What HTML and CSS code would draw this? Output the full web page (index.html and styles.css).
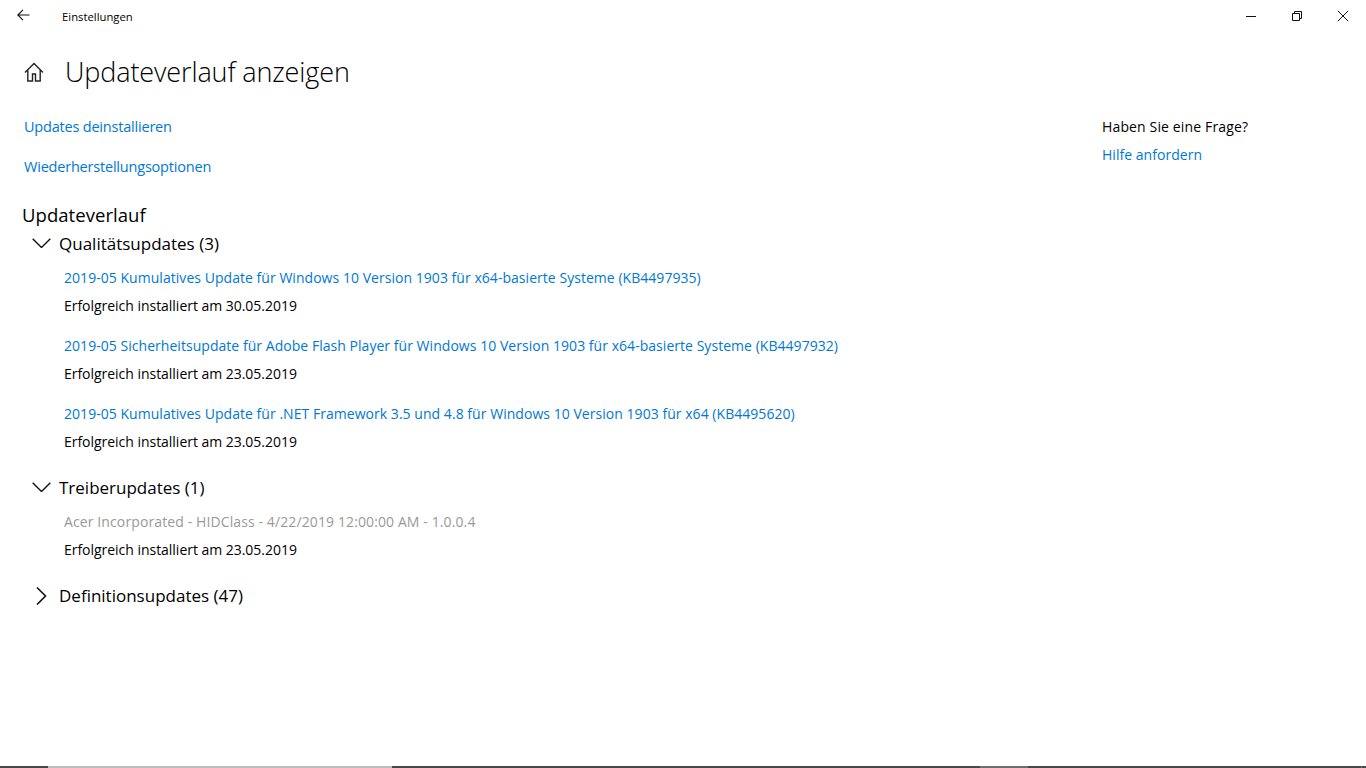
FILE: index.html
```html
<!DOCTYPE html>
<html lang="de">
<head>
<meta charset="utf-8">
<title>Einstellungen</title>
<link rel="stylesheet" href="styles.css">
</head>
<body>
<div class="window">
  <header class="titlebar">
    <div class="title-left">
      <svg class="back" width="16" height="16" viewBox="0 0 16 16"><path d="M13.5 8H2M7 2.8 1.8 8 7 13.2" fill="none" stroke="#111" stroke-width="1.1"/></svg>
      <span class="app-name">Einstellungen</span>
    </div>
    <div class="controls">
      <span class="control"><svg width="12" height="12" viewBox="0 0 12 12"><path d="M1 6.5h10" stroke="#111" stroke-width="1"/></svg></span>
      <span class="control"><svg width="12" height="12" viewBox="0 0 12 12"><path d="M1.5 3.5h7v7h-7zM3.5 3.5v-2h7v7h-2" fill="none" stroke="#111" stroke-width="1"/></svg></span>
      <span class="control"><svg width="12" height="12" viewBox="0 0 12 12"><path d="M.8.8l10.4 10.4M11.2.8.8 11.2" stroke="#111" stroke-width="1"/></svg></span>
    </div>
  </header>
  <div class="page">
    <div class="heading">
      <svg class="home" width="20" height="20" viewBox="0 0 20 20"><path d="M1 10.5 10 1.5l9 9M3.8 8v11h4.7v-7h3v7h4.7V8" fill="none" stroke="#222" stroke-width="1.4"/></svg>
      <h1>Updateverlauf anzeigen</h1>
    </div>
    <div class="columns">
      <main class="main">
        <nav class="toplinks">
          <a>Updates deinstallieren</a>
          <a>Wiederherstellungsoptionen</a>
        </nav>
        <h2>Updateverlauf</h2>
        <section class="group">
          <div class="group-head">
            <svg width="19" height="10" viewBox="0 0 19 10"><path d="M.7.7 9.5 9.5 18.3.7" fill="none" stroke="#111" stroke-width="1.4"/></svg>
            <h3>Qualitätsupdates (3)</h3>
          </div>
          <div class="item"><a>2019-05 Kumulatives Update für Windows 10 Version 1903 für x64-basierte Systeme (KB4497935)</a><p>Erfolgreich installiert am 30.05.2019</p></div>
          <div class="item"><a>2019-05 Sicherheitsupdate für Adobe Flash Player für Windows 10 Version 1903 für x64-basierte Systeme (KB4497932)</a><p>Erfolgreich installiert am 23.05.2019</p></div>
          <div class="item"><a>2019-05 Kumulatives Update für .NET Framework 3.5 und 4.8 für Windows 10 Version 1903 für x64 (KB4495620)</a><p>Erfolgreich installiert am 23.05.2019</p></div>
        </section>
        <section class="group">
          <div class="group-head">
            <svg width="19" height="10" viewBox="0 0 19 10"><path d="M.7.7 9.5 9.5 18.3.7" fill="none" stroke="#111" stroke-width="1.4"/></svg>
            <h3>Treiberupdates (1)</h3>
          </div>
          <div class="item"><span class="muted">Acer Incorporated - HIDClass - 4/22/2019 12:00:00 AM - 1.0.0.4</span><p>Erfolgreich installiert am 23.05.2019</p></div>
        </section>
        <section class="group">
          <div class="group-head">
            <svg width="19" height="20" viewBox="0 0 19 20"><path d="M5 2.5 13.5 11 5 19.5" fill="none" stroke="#111" stroke-width="1.6"/></svg>
            <h3>Definitionsupdates (47)</h3>
          </div>
        </section>
      </main>
      <aside class="side">
        <p>Haben Sie eine Frage?</p>
        <a>Hilfe anfordern</a>
      </aside>
    </div>
  </div>
  <div class="taskstrip">
    <span class="seg dark s48"></span>
    <span class="seg light s344"></span>
    <span class="seg dark s588"></span>
    <span class="seg mid s48"></span>
    <span class="seg dark s333"></span>
    <span class="seg mid s1"></span>
    <span class="seg dark fill"></span>
  </div>
</div>
</body>
</html>
```
FILE: styles.css
```css
* { box-sizing: border-box; }
html, body { margin: 0; height: 100%; }
body { background: #fff; color: #000; font-family: "Open Sans", "Noto Sans", sans-serif; font-size: 14px; overflow: hidden; }
.window { height: 768px; display: flex; flex-direction: column; }
h1, h2, h3, p { margin: 0; font-weight: 400; }
a { color: #0078d4; display: block; }

.titlebar { height: 32px; display: flex; justify-content: space-between; align-items: center; flex: none; }
.title-left { display: flex; align-items: center; padding-left: 16px; }
.back { margin-top: -2px; }
.app-name { font-size: 11.3px; margin-left: 30px; }
.controls { display: flex; }
.control { width: 46px; height: 32px; display: flex; align-items: center; justify-content: center; }

.page { flex: 1; padding: 0 0 0 24px; }
.heading { display: flex; align-items: center; height: 46px; margin-top: 16px; }
.home { margin-top: 2px; }
h1 { font-size: 27px; font-weight: 300; margin: 2px 0 0 21px; letter-spacing: -.12px; line-height: 46px; }
.columns { display: flex; justify-content: space-between; }
.main { padding-top: 21px; width: 1000px; }
.toplinks { display: flex; flex-direction: column; gap: 16px; }
.toplinks a { line-height: 24px; font-size: 14.5px; letter-spacing: -.2px; }
h2 { font-size: 18.5px; line-height: 26px; margin: 23px 0 0 -2px; letter-spacing: .05px; }
.group-head { display: flex; align-items: center; height: 32px; margin: -1px 0 5px 8px; gap: 8px; }
h3 { font-size: 17px; letter-spacing: 0; }
.group { margin-bottom: 16px; }
.item { margin: 0 0 12px 40px; }
.item a, .item .muted { font-size: 14px; line-height: 28px; display: block; letter-spacing: .04px; white-space: nowrap; }
.item .muted { letter-spacing: .11px; }
.item p { font-size: 14px; line-height: 28px; letter-spacing: -.03px; }
.muted { color: #999; }
.side { width: 264px; padding-top: 21px; }
.side a { line-height: 32px; letter-spacing: .03px; }
.side p { line-height: 24px; letter-spacing: .14px; }

.taskstrip { height: 2px; display: flex; flex: none; }
.seg { display: block; height: 2px; }
.dark { background: #484848; }
.light { background: #bdbdbd; }
.mid { background: #6e6e6e; }
.s1 { width: 1px; }
.s48 { width: 48px; }
.s333 { width: 333px; }
.s344 { width: 344px; }
.s588 { width: 588px; }
.fill { flex: 1; }
```
